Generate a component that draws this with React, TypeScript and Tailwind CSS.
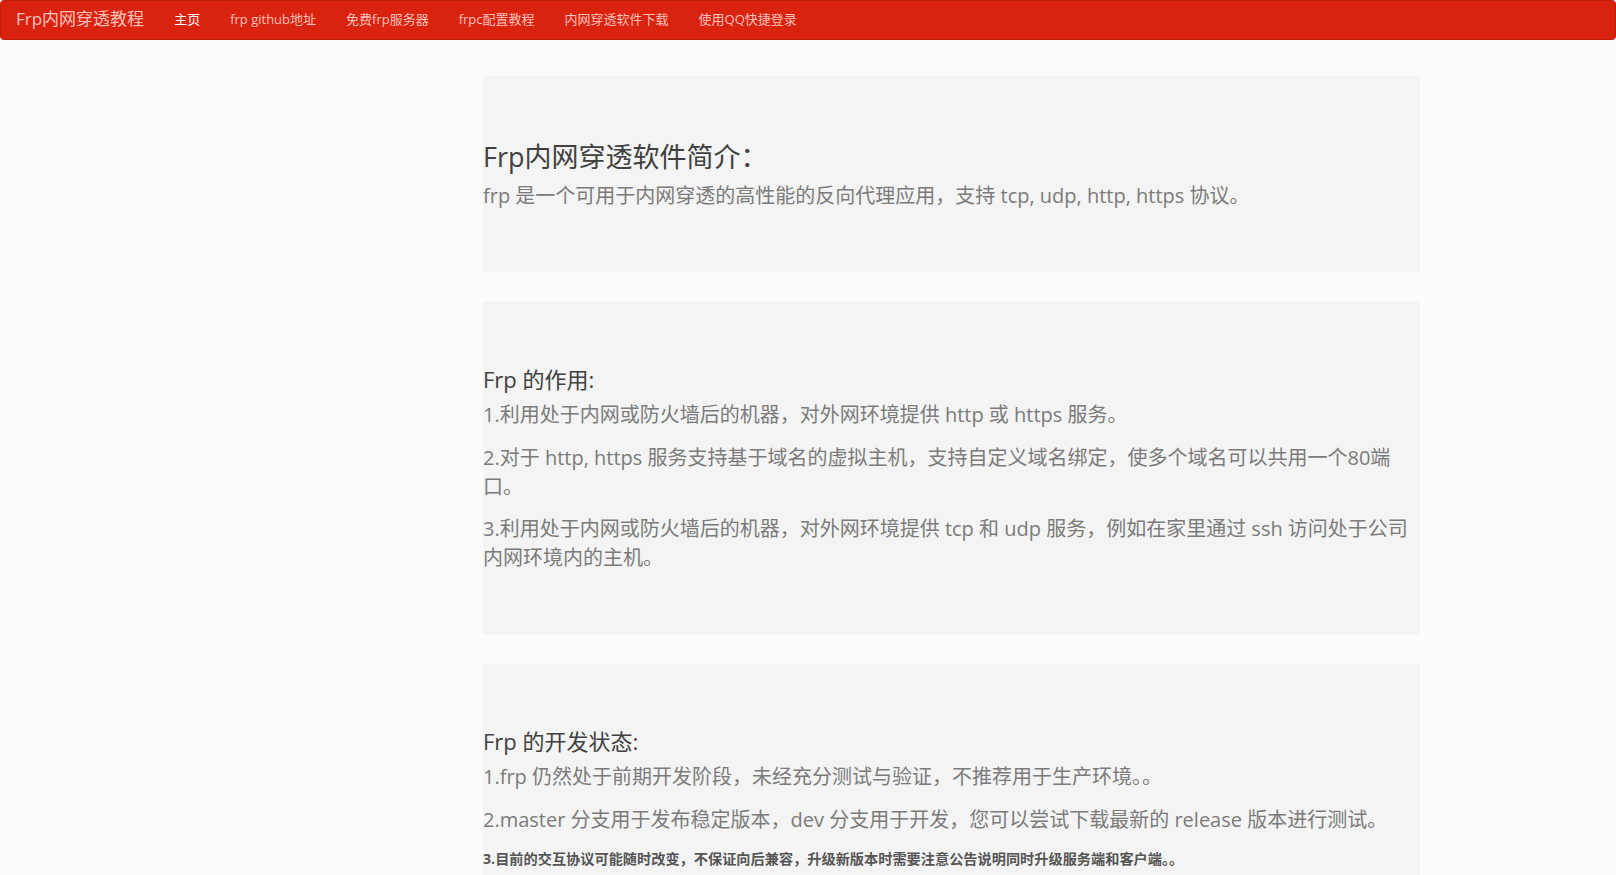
import React from "react";

const navLinks = [
  { label: "主页", active: true },
  { label: "frp github地址" },
  { label: "免费frp服务器" },
  { label: "frpc配置教程" },
  { label: "内网穿透软件下载" },
  { label: "使用QQ快捷登录" },
];

const font = "font-['Open_Sans','Noto_Sans_CJK_SC',sans-serif]";

const Section: React.FC<{ title: string; big?: boolean; children: React.ReactNode }> = ({
  title,
  big,
  children,
}) => (
  <div className="bg-[#f4f4f4] pt-12 pb-12 mb-[30px]">
    <h3
      className={`${
        big ? "text-[27px] mt-[18px]" : "text-[22px] mt-[17px]"
      } leading-[1.1] mb-[10px] text-[#404040] font-normal`}
    >
      {title}
    </h3>
    {children}
  </div>
);

const P: React.FC<{ children: React.ReactNode }> = ({ children }) => (
  <p className="text-[20px] leading-[1.4286] mb-[14px] text-[#7b7b7b]">{children}</p>
);

export default function App() {
  return (
    <div className={`min-h-screen bg-[#fcfcfc] ${font}`}>
      <nav className="h-10 bg-[#d9230f] border border-[#bf1f0d] rounded-[4px] flex items-start">
        <a className="pl-[15px] pr-[15px] text-[17px] text-[#fac0ba] leading-[36px]">
          Frp内网穿透教程
        </a>
        <ul className="flex items-start">
          {navLinks.map((link) => (
            <li key={link.label}>
              <a
                className={`block px-[15px] text-[13px] leading-[36px] ${
                  link.active ? "text-white" : "text-[#fac0ba]"
                }`}
              >
                {link.label}
              </a>
            </li>
          ))}
        </ul>
      </nav>

      <main className="pt-9 pl-[483px] w-[1420px]">
        <Section title="Frp内网穿透软件简介：" big>
          <P>frp 是一个可用于内网穿透的高性能的反向代理应用，支持 tcp, udp, http, https 协议。</P>
        </Section>

        <Section title="Frp 的作用:">
          <P>1.利用处于内网或防火墙后的机器，对外网环境提供 http 或 https 服务。</P>
          <P>
            2.对于 http, https 服务支持基于域名的虚拟主机，支持自定义域名绑定，使多个域名可以共用一个80端口。
          </P>
          <P>
            3.利用处于内网或防火墙后的机器，对外网环境提供 tcp 和 udp 服务，例如在家里通过 ssh 访问处于公司内网环境内的主机。
          </P>
        </Section>

        <Section title="Frp 的开发状态:">
          <P>1.frp 仍然处于前期开发阶段，未经充分测试与验证，不推荐用于生产环境。。</P>
          <P>2.master 分支用于发布稳定版本，dev 分支用于开发，您可以尝试下载最新的 release 版本进行测试。</P>
          <p className="text-[14.2px] leading-[19px] font-bold text-[#555] mb-[15px]">
            3.目前的交互协议可能随时改变，不保证向后兼容，升级新版本时需要注意公告说明同时升级服务端和客户端。。
          </p>
        </Section>
      </main>
    </div>
  );
}
